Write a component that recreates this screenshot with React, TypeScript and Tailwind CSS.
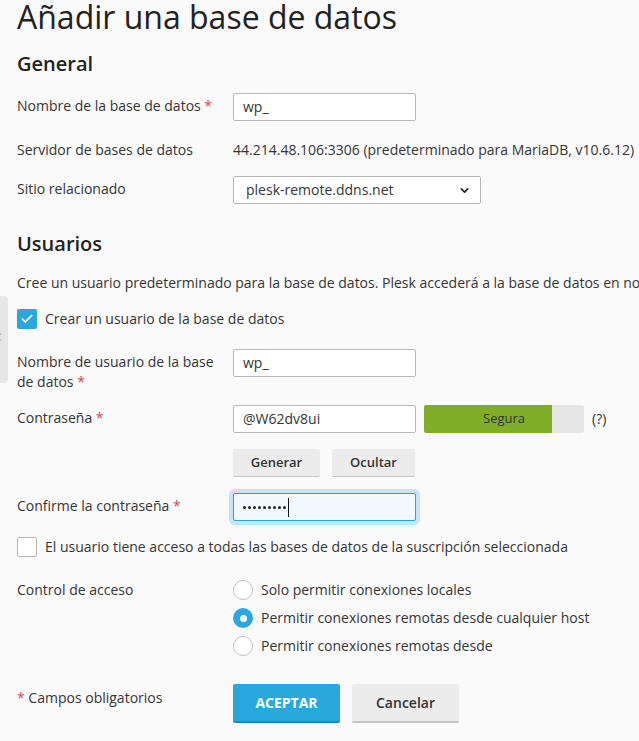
import { ChevronDown, Check, ChevronLeft } from "lucide-react";

function Req() {
  return <span className="text-[#d8435c]"> *</span>;
}

function Row({ label, children, className = "" }: { label: React.ReactNode; children?: React.ReactNode; className?: string }) {
  return (
    <div className={`flex items-start ${className}`}>
      <div className="w-[216px] shrink-0 pt-[3px] pr-4 leading-5">{label}</div>
      <div className="flex items-start">{children}</div>
    </div>
  );
}

function TextBox({ value, w = "w-[183px]" }: { value: string; w?: string }) {
  return (
    <div className={`${w} h-[28px] bg-white border border-[#b7b7b7] rounded-[2px] px-[9px] flex items-center leading-5`}>
      {value}
    </div>
  );
}

function Radio({ on, label }: { on?: boolean; label: string }) {
  return (
    <div className="flex items-center gap-[8px] h-5">
      {on ? (
        <span className="w-5 h-5 rounded-full bg-[#29a7de] flex items-center justify-center">
          <span className="w-[7px] h-[7px] rounded-full bg-white" />
        </span>
      ) : (
        <span className="w-5 h-5 rounded-full bg-white border border-[#c2c2c2]" />
      )}
      <span className="leading-5">{label}</span>
    </div>
  );
}

export default function App() {
  return (
    <div className="relative min-h-screen w-full overflow-hidden bg-[#fafafa] text-[#353535] text-[14px] font-['Open_Sans',sans-serif]">
      <div className="absolute left-0 top-[296px] w-[8px] h-[87px] bg-[#e6e6e6] rounded-r-[4px] overflow-hidden">
        <ChevronLeft className="absolute -left-[7px] top-[35px] w-[12px] h-[12px] text-[#555]" strokeWidth={1.5} />
      </div>

      <div className="pl-[17px] whitespace-nowrap">
        <h1 className="text-[32px] leading-[33px] text-[#222]">Añadir una base de datos</h1>

        <h2 className="mt-[19px] text-[20px] leading-6 font-semibold text-[#222]">General</h2>

        <Row className="mt-[17px]" label={<>Nombre de la base de datos<Req /></>}>
          <TextBox value="wp_" />
        </Row>

        <Row className="mt-[16px]" label="Servidor de bases de datos">
          <div className="pt-[3px] leading-5">44.214.48.106:3306 (predeterminado para MariaDB, v10.6.12)</div>
        </Row>

        <Row className="mt-[16px]" label="Sitio relacionado">
          <div className="w-[248px] h-[28px] bg-white border border-[#b7b7b7] rounded-[2px] pl-[12px] pr-[9px] flex items-center justify-between leading-5">
            <span>plesk-remote.ddns.net</span>
            <ChevronDown className="w-[13px] h-[13px] text-[#222]" strokeWidth={3} />
          </div>
        </Row>

        <h2 className="mt-[28px] text-[20px] leading-6 font-semibold text-[#222]">Usuarios</h2>

        <p className="mt-[17px] leading-5">
          Cree un usuario predeterminado para la base de datos. Plesk accederá a la base de datos en nombre de este usuario.
        </p>

        <div className="mt-[16px] flex items-center gap-[8px] h-5">
          <span className="w-[20px] h-[20px] rounded-[2px] bg-[#29a7de] flex items-center justify-center">
            <Check className="w-[14px] h-[14px] text-white" strokeWidth={3} />
          </span>
          <span className="leading-5">Crear un usuario de la base de datos</span>
        </div>

        <Row
          className="mt-[20px]"
          label={
            <span className="whitespace-normal block w-[200px]">
              Nombre de usuario de la base de datos<Req />
            </span>
          }
        >
          <TextBox value="wp_" />
        </Row>

        <Row className="mt-[13px]" label={<>Contraseña<Req /></>}>
          <TextBox value="@W62dv8ui" />
          <div className="ml-[8px] relative w-[160px] h-[28px] bg-[#e6e6e6] rounded-[2px] overflow-hidden">
            <div className="absolute left-0 top-0 h-full w-[128px] bg-[#80ae26]" />
            <div className="relative h-full flex items-center justify-center text-[13px] text-[#333]">Segura</div>
          </div>
          <span className="ml-[8px] pt-[4px] leading-5">(?)</span>
        </Row>

        <Row className="mt-[16px]" label="">
          <button className="w-[87px] h-[28px] bg-[#ececec] border-b border-[#c8c8c8] rounded-[2px] text-[13px] font-semibold text-[#333]">
            Generar
          </button>
          <button className="ml-[12px] w-[83px] h-[28px] bg-[#ececec] border-b border-[#c8c8c8] rounded-[2px] text-[13px] font-semibold text-[#333]">
            Ocultar
          </button>
        </Row>

        <Row className="mt-[16px]" label={<>Confirme la contraseña<Req /></>}>
          <div className="w-[183px] h-[28px] bg-[#f1f9fe] border border-[#2aa4dc] rounded-[2px] pl-[9px] flex items-center ring-4 ring-[#c6e5f8]">
            <span className="flex gap-[2px]">
              {Array.from({ length: 9 }).map((_, i) => (
                <span key={i} className="w-[3px] h-[3px] rounded-full bg-[#222]" />
              ))}
            </span>
            <span className="ml-[2px] w-[1px] h-[19px] bg-[#111]" />
          </div>
        </Row>

        <div className="mt-[16px] flex items-center gap-[8px] h-5">
          <span className="w-[20px] h-[20px] rounded-[2px] bg-white border border-[#b7b7b7]" />
          <span className="leading-5">El usuario tiene acceso a todas las bases de datos de la suscripción seleccionada</span>
        </div>

        <div className="mt-[23px] flex items-start">
          <div className="w-[216px] shrink-0 leading-5">Control de acceso</div>
          <div className="flex flex-col gap-[8px]">
            <Radio label="Solo permitir conexiones locales" />
            <Radio on label="Permitir conexiones remotas desde cualquier host" />
            <Radio label="Permitir conexiones remotas desde" />
          </div>
        </div>

        <div className="mt-[28px] flex items-start">
          <div className="w-[216px] shrink-0 pt-[4px] leading-5">
            <span className="text-[#d8435c]">*</span> Campos obligatorios
          </div>
          <button className="w-[107px] h-[39px] bg-[#29a8de] border-b-2 border-[#1d88b6] rounded-[2px] text-white font-bold text-[14px]">
            ACEPTAR
          </button>
          <button className="ml-[12px] w-[107px] h-[39px] bg-[#ececec] border-b-2 border-[#c4c4c4] rounded-[2px] text-[#333] font-semibold text-[14px]">
            Cancelar
          </button>
        </div>
      </div>
    </div>
  );
}
